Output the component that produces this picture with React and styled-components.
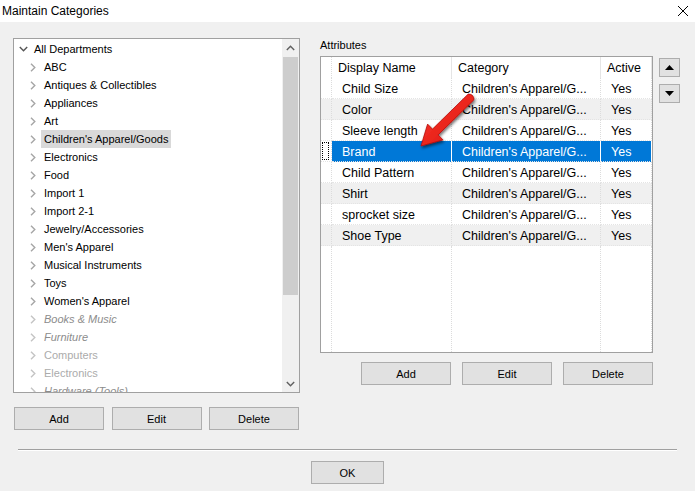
import styled, { createGlobalStyle } from "styled-components";

const Global = createGlobalStyle`
  html, body { margin: 0; padding: 0; background: #f0f0f0; }
  body { font-family: "Liberation Sans", Arial, sans-serif; }
`;

const Window = styled.div`
  position: relative;
  width: 695px;
  height: 491px;
  background: #f0f0f0;
  display: flex;
  flex-direction: column;
  overflow: hidden;
  color: #000;
`;

const TitleBar = styled.div`
  height: 22px;
  background: #fff;
  display: flex;
  align-items: center;
  justify-content: space-between;
  padding: 0 6px 0 2px;
  font-size: 12px;
`;

const Close = styled.svg`
  width: 12px;
  height: 12px;
`;

const Body = styled.div`
  display: flex;
  padding: 16px 0 0 13px;
`;

const LeftCol = styled.div`
  display: flex;
  flex-direction: column;
  width: 287px;
`;

const Tree = styled.div`
  box-sizing: border-box;
  height: 355px;
  border: 1px solid #a0a0a0;
  background: #fff;
  display: flex;
  overflow: hidden;
`;

const TreeItems = styled.div`
  flex: 1;
  padding-top: 1px;
  overflow: hidden;
`;

const TreeRow = styled.div`
  height: 18px;
  display: flex;
  align-items: center;
  padding-left: ${(p) => 1 + p.$level * 10}px;
  font-size: 11px;
  white-space: nowrap;
`;

const Twisty = styled.span`
  width: 16px;
  height: 18px;
  display: flex;
  align-items: center;
  justify-content: center;
`;

const Label = styled.span`
  height: 18px;
  line-height: 18px;
  padding: 0 3px;
  background: ${(p) => (p.$selected ? "#d9d9d9" : "transparent")};
  color: ${(p) => (p.$state === "italic" ? "#8c8c8c" : p.$state === "dim" ? "#ababab" : "#000")};
  font-style: ${(p) => (p.$state === "italic" ? "italic" : "normal")};
`;

const ScrollBar = styled.div`
  width: 17px;
  background: #f0f0f0;
  display: flex;
  flex-direction: column;
`;

const ScrollArrow = styled.div`
  height: 17px;
  display: flex;
  align-items: center;
  justify-content: center;
`;

const Thumb = styled.div`
  height: 238px;
  margin: 1px 1px 0 1px;
  background: #cdcdcd;
`;

const Track = styled.div`
  flex: 1;
`;

const ButtonRow = styled.div`
  display: flex;
  gap: ${(p) => p.$gap}px;
  margin-top: ${(p) => p.$top}px;
  margin-left: ${(p) => p.$left || 0}px;
  justify-content: ${(p) => (p.$end ? "flex-end" : "flex-start")};
`;

const Button = styled.button`
  box-sizing: border-box;
  width: ${(p) => p.$w || 90}px;
  height: 23px;
  background: #e1e1e1;
  border: 1px solid #adadad;
  border-radius: 0;
  font-family: "Liberation Sans", Arial, sans-serif;
  font-size: 11px;
  color: #000;
  padding: 0;
`;

const RightCol = styled.div`
  display: flex;
  flex-direction: column;
  margin-left: 20px;
`;

const Caption = styled.div`
  height: 18px;
  line-height: 14px;
  font-size: 11px;
`;

const GridArea = styled.div`
  display: flex;
`;

const GridWrap = styled.div`
  display: flex;
  flex-direction: column;
`;

const Grid = styled.div`
  box-sizing: border-box;
  width: 333px;
  height: 297px;
  border: 1px solid #a0a0a0;
  background: #fff;
  display: flex;
  flex-direction: column;
  font-size: 12.5px;
`;

const Row = styled.div`
  display: grid;
  grid-template-columns: 11px 120px 149px 51px;
  height: 21px;
  background: ${(p) => (p.$alt ? "#f0f0f0" : "#fff")};
`;

const Filler = styled(Row)`
  flex: 1;
  height: auto;
`;

const HeadCell = styled.div`
  display: flex;
  align-items: center;
  padding: 1px 0 0 6px;
  border-right: 1px ${(p) => (p.$corner ? "dotted #dcdcdc" : "solid #e5e5e5")};
  white-space: nowrap;
  overflow: hidden;
`;

const Cell = styled.div`
  box-sizing: border-box;
  display: flex;
  align-items: center;
  padding: 1px 0 0 ${(p) => (p.$corner ? 0 : 10)}px;
  border-right: 1px ${(p) => (p.$sel ? "solid #fff" : "dotted #dcdcdc")};
  border-bottom: ${(p) => (p.$open ? "none" : "1px dotted #e4e4e4")};
  background: ${(p) => (p.$sel ? "#0078d7" : "transparent")};
  color: ${(p) => (p.$sel ? "#fff" : "#000")};
  white-space: nowrap;
  overflow: hidden;
`;

const Focus = styled.div`
  width: 7px;
  height: 18px;
  margin: -1px 0 0 1px;
  border: 1px dotted #000;
  box-sizing: border-box;
`;

const SideButtons = styled.div`
  display: flex;
  flex-direction: column;
  gap: 7px;
  margin: 2px 0 0 6px;
`;

const SmallButton = styled.button`
  box-sizing: border-box;
  width: 21px;
  height: 19px;
  background: #e1e1e1;
  border: 1px solid #adadad;
  padding: 0;
  display: flex;
  align-items: center;
  justify-content: center;
`;

const Separator = styled.div`
  margin: 19px 18px 0 18px;
  height: 1px;
  background: #a0a0a0;
  border-bottom: 1px solid #fff;
`;

const Footer = styled.div`
  display: flex;
  justify-content: center;
  margin-top: 10px;
`;

const Overlay = styled.svg`
  position: absolute;
  left: 0;
  top: 0;
  pointer-events: none;
`;

const Chevron = ({ dir = "right", color = "#a6a6a6" }) =>
  dir === "right" ? (
    <svg width="6" height="9" viewBox="0 0 6 9">
      <path d="M1 0.8 L4.8 4.5 L1 8.2" fill="none" stroke={color} strokeWidth="1.4" />
    </svg>
  ) : dir === "down" ? (
    <svg width="9" height="6" viewBox="0 0 9 6">
      <path d="M0.8 1 L4.5 4.8 L8.2 1" fill="none" stroke={color} strokeWidth="1.4" />
    </svg>
  ) : (
    <svg width="9" height="6" viewBox="0 0 9 6">
      <path d="M0.8 5 L4.5 1.2 L8.2 5" fill="none" stroke={color} strokeWidth="1.4" />
    </svg>
  );

const departments = [
  { name: "ABC" },
  { name: "Antiques & Collectibles" },
  { name: "Appliances" },
  { name: "Art" },
  { name: "Children's Apparel/Goods", selected: true },
  { name: "Electronics" },
  { name: "Food" },
  { name: "Import 1" },
  { name: "Import 2-1" },
  { name: "Jewelry/Accessories" },
  { name: "Men's Apparel" },
  { name: "Musical Instruments" },
  { name: "Toys" },
  { name: "Women's Apparel" },
  { name: "Books & Music", state: "italic" },
  { name: "Furniture", state: "italic" },
  { name: "Computers", state: "dim" },
  { name: "Electronics", state: "dim" },
  { name: "Hardware (Tools)", state: "italic" },
];

const attributes = [
  "Child Size",
  "Color",
  "Sleeve length",
  "Brand",
  "Child Pattern",
  "Shirt",
  "sprocket size",
  "Shoe Type",
];

const SELECTED = 3;

export default function App() {
  return (
    <Window>
      <Global />
      <TitleBar>
        <span>Maintain Categories</span>
        <Close viewBox="0 0 12 12">
          <path d="M1 1 L11 11 M11 1 L1 11" stroke="#000" strokeWidth="1" />
        </Close>
      </TitleBar>

      <Body>
        <LeftCol>
          <Tree>
            <TreeItems>
              <TreeRow $level={0}>
                <Twisty>
                  <Chevron dir="down" color="#555" />
                </Twisty>
                <Label>All Departments</Label>
              </TreeRow>
              {departments.map((d, i) => (
                <TreeRow key={i} $level={1}>
                  <Twisty>
                    <Chevron color={d.state ? "#c4c4c4" : "#a6a6a6"} />
                  </Twisty>
                  <Label $selected={d.selected} $state={d.state}>
                    {d.name}
                  </Label>
                </TreeRow>
              ))}
            </TreeItems>
            <ScrollBar>
              <ScrollArrow>
                <Chevron dir="up" color="#606060" />
              </ScrollArrow>
              <Thumb />
              <Track />
              <ScrollArrow>
                <Chevron dir="down" color="#606060" />
              </ScrollArrow>
            </ScrollBar>
          </Tree>
          <ButtonRow $gap={7.5} $top={14} $left={1}>
            <Button>Add</Button>
            <Button>Edit</Button>
            <Button>Delete</Button>
          </ButtonRow>
        </LeftCol>

        <RightCol>
          <Caption>Attributes</Caption>
          <GridArea>
            <GridWrap>
              <Grid>
                <Row>
                  <HeadCell $corner />
                  <HeadCell>Display Name</HeadCell>
                  <HeadCell>Category</HeadCell>
                  <HeadCell>Active</HeadCell>
                </Row>
                {attributes.map((a, i) => {
                  const sel = i === SELECTED;
                  return (
                    <Row key={a} $alt={i % 2 === 1 && !sel}>
                      <Cell $corner>{sel && <Focus />}</Cell>
                      <Cell $sel={sel}>{a}</Cell>
                      <Cell $sel={sel}>Children's Apparel/G...</Cell>
                      <Cell $sel={sel}>Yes</Cell>
                    </Row>
                  );
                })}
                <Filler>
                  <Cell $corner $open />
                  <Cell $open />
                  <Cell $open />
                  <Cell $open />
                </Filler>
              </Grid>
              <ButtonRow $gap={11} $top={9} $end>
                <Button>Add</Button>
                <Button>Edit</Button>
                <Button>Delete</Button>
              </ButtonRow>
            </GridWrap>
            <SideButtons>
              <SmallButton>
                <svg width="9" height="5" viewBox="0 0 9 5">
                  <path d="M0 5 L4.5 0 L9 5 Z" fill="#000" />
                </svg>
              </SmallButton>
              <SmallButton>
                <svg width="9" height="5" viewBox="0 0 9 5">
                  <path d="M0 0 L9 0 L4.5 5 Z" fill="#000" />
                </svg>
              </SmallButton>
            </SideButtons>
          </GridArea>
        </RightCol>
      </Body>

      <Separator />
      <Footer>
        <Button $w={73}>OK</Button>
      </Footer>

      <Overlay width="695" height="491" viewBox="0 0 695 491">
        <defs>
          <filter id="arrowShadow" x="-30%" y="-30%" width="160%" height="160%">
            <feGaussianBlur in="SourceAlpha" stdDeviation="1.6" />
            <feOffset dx="1" dy="2" result="blur" />
            <feComponentTransfer>
              <feFuncA type="linear" slope="0.55" />
            </feComponentTransfer>
            <feMerge>
              <feMergeNode />
              <feMergeNode in="SourceGraphic" />
            </feMerge>
          </filter>
          <linearGradient id="arrowFill" x1="0" y1="0" x2="1" y2="1">
            <stop offset="0" stopColor="#ff3b30" />
            <stop offset="1" stopColor="#d8120c" />
          </linearGradient>
        </defs>
        <path
          d="M468.2 94.1 L432.5 129.1 L427.6 124.1 L421 146 L443 139.9 L438.1 134.9 L473.8 99.9 Q474 94 468.2 94.1 Z"
          fill="url(#arrowFill)"
          stroke="#b50e08"
          strokeWidth="0.8"
          strokeLinejoin="round"
          filter="url(#arrowShadow)"
        />
      </Overlay>
    </Window>
  );
}
